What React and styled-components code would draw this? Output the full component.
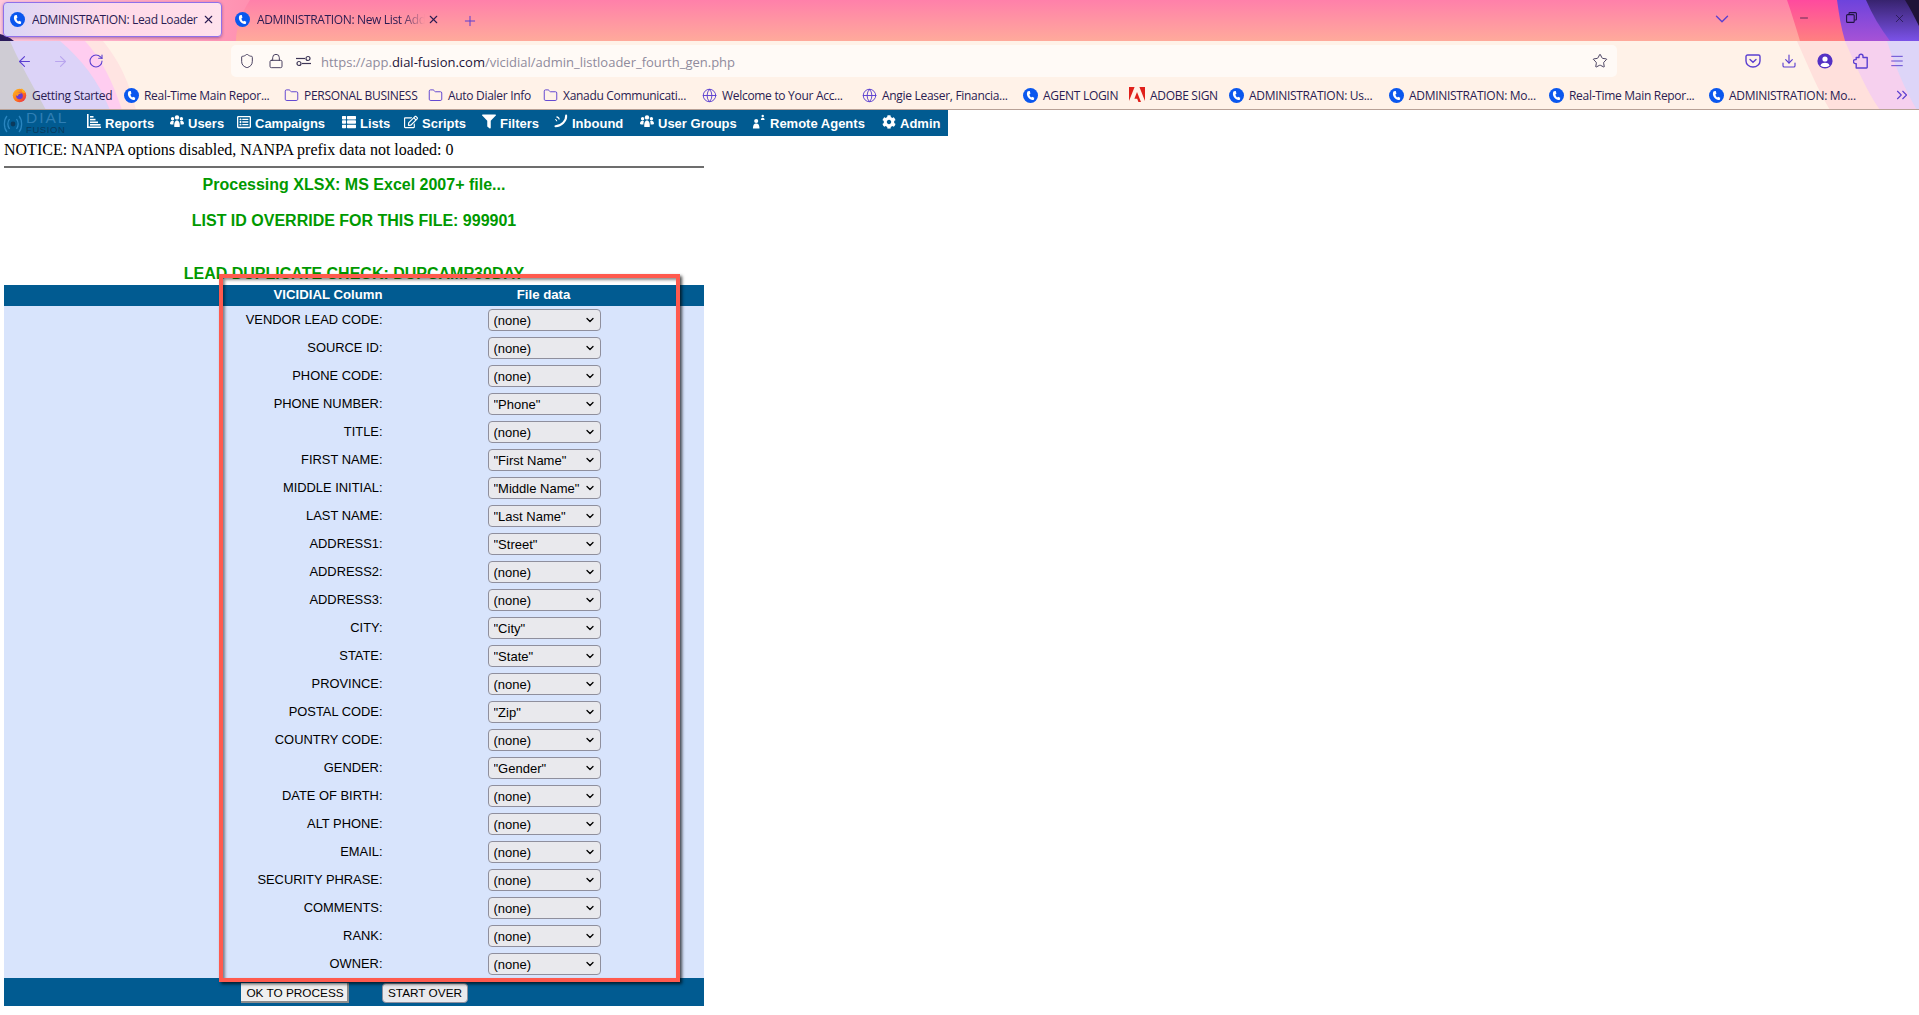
import React from 'react';
import styled, { createGlobalStyle } from 'styled-components';
import { ArrowLeft, ArrowRight, RotateCw, Shield, Lock, Star, Download, ChevronDown, X, Plus, Minus, Folder, Globe, Menu, ChevronsRight } from 'lucide-react';
import { FaRegListAlt, FaThList, FaRegEdit, FaFilter, FaCog } from 'react-icons/fa';

const Global = createGlobalStyle`
  html, body { margin: 0; padding: 0; background: #fff; overflow: hidden; height: 100%; }
  #root { width: 1919px; height: 1015px; }
`;

const UI = `"Open Sans", "Noto Sans", sans-serif`;
const AR = `"Liberation Sans", Arial, sans-serif`;

const Chrome = styled.header`
  position: relative; height: 110px; box-sizing: border-box; border-bottom: 1px solid #b8a196;
  background: #fff2e8; overflow: hidden; font-family: ${UI}; color: #2a1c52;
`;
const Decor = styled.svg`position: absolute; inset: 0; width: 1919px; height: 110px;`;
const Layer = styled.div`position: relative; display: flex; flex-direction: column;`;

const TabStrip = styled.div`display: flex; align-items: center; height: 41px; padding-left: 3px; position: relative;`;
const Tab = styled.div`
  display: flex; align-items: center; box-sizing: border-box; height: 35px; margin-top: -2px; width: ${p => p.$w}px; padding-left: ${p => p.$pad}px;
  border-radius: 4px; position: relative;
  ${p => p.$active && `background: linear-gradient(90deg, rgba(214,214,248,.95), rgba(255,224,238,.85) 45%, #ffe2ec); border: 1px solid #8f70ea; box-shadow: 0 1px 3px rgba(60,30,120,.45);`}
`;
const TabTitle = styled.span`
  margin-left: 7px; font-size: 12px; width: ${p => p.$w}px; flex: none; white-space: nowrap; overflow: hidden; letter-spacing: -.35px;
  ${p => p.$fade && `-webkit-mask-image: linear-gradient(90deg,#000 85%,transparent);`}
`;
const TabClose = styled(X)`margin-left: ${p => p.$m}px; flex: none;`;
const NewTab = styled(Plus)`margin-left: 18px; color: #5b3fd0; flex: none;`;
const ListTabs = styled(ChevronDown)`position: absolute; left: 1711px; top: 8px; color: #5b3fd0;`;
const WindowControls = styled.div`position: absolute; left: 1798px; top: 12px; display: flex; gap: 36px; color: #1f1442;`;

const Toolbar = styled.div`display: flex; align-items: center; height: 36px; padding-left: 15px;`;
const ToolBtn = styled.span`
  display: flex; width: 18px; justify-content: center; margin-top: 4px; margin-right: ${p => p.$m || 0}px; color: ${p => p.$dim ? '#b9a5ee' : '#5b3fd0'};
`;
const UrlBar = styled.div`
  width: 1386px; height: 32px; margin-left: 126px; margin-top: 4px; background: #fffaf6; border-radius: 5px; box-sizing: border-box;
  display: flex; align-items: center; padding-left: 8px;
`;
const UrlIcon = styled.span`display: flex; width: 16px; justify-content: center; margin-right: ${p => p.$m}px; color: #3d3556;`;
const Url = styled.span`font-size: 13px; color: #8f8a9c; margin: 1px 0 0 1px; white-space: nowrap; width: 1271px; flex: none;`;
const UrlHost = styled.span`color: #1c1238;`;
const RightIcons = styled.div`display: flex; margin-left: 128px; gap: 20px; color: #5b3fd0; margin-top: 4px;`;

const Bookmarks = styled.div`display: flex; align-items: center; box-sizing: border-box; height: 32px; padding: 4px 0 0 12px; font-size: 12px;`;
const Bookmark = styled.div`display: flex; align-items: center; width: ${p => p.$w}px; flex: none; white-space: nowrap; overflow: hidden; letter-spacing: -.3px;`;
const BookmarkLabel = styled.span`margin-left: 5px;`;
const FolderIcon = styled(Folder)`color: #5b3fd0; flex: none;`;
const GlobeIcon = styled(Globe)`color: #5b3fd0; flex: none;`;
const More = styled(ChevronsRight)`color: #5b3fd0; margin-left: 20px; flex: none;`;

const NavBar = styled.nav`
  width: 948px; height: 26px; background: #015b91; display: flex; align-items: center;
  font: bold 13px ${AR}; color: #fff;
`;
const Logo = styled.div`display: flex; width: 87px; height: 26px; flex: none; padding-left: 3px; box-sizing: border-box; align-items: flex-start;`;
const LogoText = styled.div`display: flex; flex-direction: column; margin-left: 3px; font-family: ${AR}; font-weight: normal;`;
const LogoDial = styled.span`font-size: 15.5px; line-height: 15px; color: #2f7fb5; letter-spacing: 2px;`;
const LogoFusion = styled.span`font-size: 9.5px; line-height: 10px; color: #0b3a5c; letter-spacing: .6px;`;
const NavItem = styled.div`display: flex; align-items: center; width: ${p => p.$w}px; flex: none; white-space: nowrap;`;
const NavIcon = styled.span`display: flex; width: 14px; justify-content: center; margin-right: 4px; margin-top: -3px; flex: none;`;

const Page = styled.main`width: 700px; margin-left: 4px;`;
const Notice = styled.div`font: 16px/18px "Liberation Serif", "Times New Roman", serif; color: #000; margin-top: 5px;`;
const Rule = styled.hr`border: 0; height: 2px; background: #6d6d6d; margin: 7px 0 0;`;
const Status = styled.div`font: bold 16px/18px ${AR}; color: #009900; text-align: center; margin-top: ${p => p.$m}px;`;

const Table = styled.section`position: relative; margin-top: 2px; background: #d8e4fc; font-family: ${AR};`;
const Head = styled.div`
  display: grid; grid-template-columns: 378.5px 1fr; height: 21px; background: #015b91; color: #fff; font-size: 13.2px; font-weight: bold; align-items: center;
`;
const HeadLeft = styled.div`text-align: right; margin-top: -3px;`;
const HeadRight = styled.div`text-align: center; width: 322px; margin-top: -3px;`;
const Row = styled.div`display: grid; grid-template-columns: 378.5px 1fr; height: 28px; align-items: center;`;
const Label = styled.label`font-size: 12.9px; color: #000; text-align: right; margin-bottom: 2px;`;
const SelectWrap = styled.div`position: relative; width: 113px; height: 22px; margin-left: 105px;`;
const Select = styled.select`
  appearance: none; width: 113px; height: 22px; box-sizing: border-box; border: 1px solid #8f8f9d; border-radius: 4px; background: #e9e9ed;
  font: 13px ${AR}; color: #000; padding: 0 16px 0 5px; margin: 0; display: block;
`;
const Arrow = styled(ChevronDown)`position: absolute; right: 4.5px; top: 5px; pointer-events: none;`;
const Foot = styled.div`display: flex; height: 28px; background: #015b91; padding-left: 237px; gap: 33px; align-items: flex-start; box-sizing: border-box; padding-top: 5px;`;
const Btn = styled.button`
  height: 20px; width: ${p => p.$w}px; box-sizing: border-box; margin: 0; font: 11.8px ${AR}; color: #000; background: #efefef;
  ${p => p.$square ? `padding: 2px 0 0 2px; border: 0; border-right: 2px solid #8d8d8d; border-bottom: 2px solid #8d8d8d;` : `padding: 0; border: 1px solid #8f8f9d; border-radius: 4px; background: #e9e9ed;`}
`;
const Marker = styled.div`
  position: absolute; left: 214.5px; top: -11px; width: 461px; height: 708px; box-sizing: border-box;
  border: 4.5px solid #ff5a4e;
  box-shadow: 2px 2px 3px rgba(0,0,0,.7), inset 2px 2px 3px rgba(0,0,0,.45);
  pointer-events: none;
`;

const PhoneFav = () => (
  <svg width="15" height="15" viewBox="0 0 16 16" style={{ flex: 'none' }}>
    <circle cx="8" cy="8" r="8" fill="#0a57ee" />
    <path d="M5 3.4 C3.6 5.2 4 8 5.6 10.2 C7.2 12.4 9.6 13.4 11.6 12.6 L12 10.4 L9.6 9.3 L8.8 10.1 C7.8 9.4 7 8 6.8 6.8 L7.9 6.2 L7.3 3.2 Z" fill="#fff" />
  </svg>
);
const FirefoxFav = () => (
  <svg width="15" height="16" viewBox="0 0 16 16" style={{ flex: 'none' }}>
    <defs><linearGradient id="ff" x1="0" y1="0" x2="1" y2="1"><stop offset="0" stopColor="#ffc21a" /><stop offset=".6" stopColor="#ff6a1f" /><stop offset="1" stopColor="#e01f5a" /></linearGradient></defs>
    <circle cx="8" cy="8.6" r="7.2" fill="url(#ff)" />
    <path d="M10 0.8 C12.4 2.2 13.6 3.8 14.2 6 L11 5 Z" fill="#ffb31a" />
    <circle cx="8" cy="8.8" r="3.6" fill="#6a3ad0" />
    <path d="M3 6.5 C5 5 8 4.8 10.5 6 C8.5 6 6.5 7 6.2 9 C5 9 3.8 8 3 6.5Z" fill="#ff9a1f" />
  </svg>
);
const AdobeFav = () => (
  <svg width="16" height="16" viewBox="0 0 16 16" style={{ flex: 'none' }}>
    <path d="M0 0H5.6L0 14Z M10.4 0H16V14Z M8 5L12 15H9.4L8.2 11.8H5.4Z" fill="#e0201b" />
  </svg>
);
const ReportsIcon = () => (
  <svg width="14" height="15" viewBox="0 0 14 15" fill="#fff">
    <path d="M0 0H1.6V12.6H14V14H0Z" /><rect x="3" y="2" width="3.5" height="1.6" /><rect x="3" y="4.8" width="5.5" height="1.6" /><rect x="3" y="7.5" width="8" height="1.6" /><rect x="3" y="10" width="10.5" height="1.6" />
  </svg>
);
const GroupIcon = () => (
  <svg width="14" height="13" viewBox="0 0 14 13" fill="#fff">
    <circle cx="7" cy="2.4" r="2.2" /><circle cx="2.6" cy="3.8" r="1.7" /><circle cx="11.4" cy="3.8" r="1.7" />
    <path d="M4.3 12C4 7.6 5 5.4 7 5.4C9 5.4 10 7.6 9.7 12Z" /><path d="M0 9C0 6.8 1 5.8 2.6 5.8C3.2 5.8 3.6 6 3.9 6.2C3.5 7.2 3.4 8.2 3.4 9.6C1.8 9.6 .6 9.4 0 9Z" /><path d="M14 9C14 6.8 13 5.8 11.4 5.8C10.8 5.8 10.4 6 10.1 6.2C10.5 7.2 10.6 8.2 10.6 9.6C12.2 9.6 13.4 9.4 14 9Z" />
  </svg>
);
const InboundIcon = () => (
  <svg width="15" height="15" viewBox="0 0 15 15" fill="none" stroke="#fff">
    <path d="M13 1.2C13.4 6.6 8.2 12.4 1.6 12.6" strokeWidth="2.2" strokeLinecap="round" />
    <path d="M2.6 2.6C4.4 2.8 5.4 3.8 5.6 5.4" strokeWidth="1.2" /><path d="M1.2 5.4C2.2 5.5 2.9 6.2 3 7.2" strokeWidth="1.2" />
  </svg>
);
const RemoteIcon = () => (
  <svg width="15" height="15" viewBox="0 0 15 15" fill="#fff">
    <circle cx="4.5" cy="7" r="2.2" /><path d="M1 15 C1 11 2.5 9.6 4.5 9.6 C6.5 9.6 8 11 8 15Z" /><circle cx="11.5" cy="1.6" r="1.3" /><path d="M9.5 6 C9.5 4.2 10.3 3.4 11.5 3.4 C12.7 3.4 13.5 4.2 13.5 6Z" />
  </svg>
);
const SliderIcon = () => (
  <svg width="15" height="12" viewBox="0 0 15 12" fill="none" stroke="#3d3556" strokeWidth="1.2">
    <path d="M0 3.5H9" /><circle cx="12" cy="3.5" r="2" /><path d="M15 8.5H6" /><circle cx="3" cy="8.5" r="2" />
  </svg>
);
const PocketIcon = () => (
  <svg width="16" height="16" viewBox="0 0 16 16" fill="none" stroke="currentColor" strokeWidth="1.4">
    <path d="M2.5 2H13.5C14.3 2 15 2.7 15 3.5V8C15 11.5 11.8 14 8 14C4.2 14 1 11.5 1 8V3.5C1 2.7 1.7 2 2.5 2Z" /><path d="M5 6.5L8 9.3L11 6.5" strokeLinecap="round" />
  </svg>
);
const ProfileIcon = () => (
  <svg width="16" height="16" viewBox="0 0 16 16">
    <circle cx="8" cy="8" r="7.6" fill="#5431c4" /><circle cx="8" cy="6" r="2.6" fill="#fff" /><path d="M3.4 12.4C4.4 10.4 6 9.8 8 9.8C10 9.8 11.6 10.4 12.6 12.4C10.2 14.4 5.8 14.4 3.4 12.4Z" fill="#fff" />
  </svg>
);
const ExtensionIcon = () => (
  <svg width="16" height="16" viewBox="0 0 16 16" fill="none" stroke="currentColor" strokeWidth="1.4" strokeLinejoin="round">
    <path d="M6 4.5V3.2a2 2 0 0 1 4 0V4.5h4.2v9.8a.7.7 0 0 1-.7.7H3.2V10.6H2.4a2 2 0 0 1 0-4h.8V4.5Z" />
  </svg>
);
const SignalIcon = () => (
  <svg width="20" height="22" viewBox="0 0 20 22" fill="none" stroke="#2a86c0" strokeWidth="1.3" style={{ flex: 'none', marginTop: 3 }}>
    <path d="M4 3C0.5 7 0.5 15 4 19" /><path d="M6.5 6C4.5 9 4.5 13 6.5 16" /><path d="M16 3C19.5 7 19.5 15 16 19" /><path d="M13.5 6C15.5 9 15.5 13 13.5 16" /><circle cx="10" cy="11" r="2.4" fill="#0b3a5c" stroke="none" />
  </svg>
);
const RestoreIcon = () => (
  <svg width="11" height="11" viewBox="0 0 11 11" fill="none" stroke="currentColor" strokeWidth="1.1">
    <rect x=".6" y="2.6" width="7.6" height="7.8" rx="1" /><path d="M3 2.4V1.4C3 .9 3.4 .6 3.8 .6H9.4C10 .6 10.4 1 10.4 1.6V7.2C10.4 7.7 10 8 9.6 8H8.4" />
  </svg>
);

const bookmarks = [
  { n: 'Getting Started', w: 112, i: 'ff' },
  { n: 'Real-Time Main Repor...', w: 160, i: 'ph' },
  { n: 'PERSONAL BUSINESS', w: 144, i: 'fo' },
  { n: 'Auto Dialer Info', w: 115, i: 'fo' },
  { n: 'Xanadu Communicati...', w: 159, i: 'fo' },
  { n: 'Welcome to Your Acc...', w: 160, i: 'gl' },
  { n: 'Angie Leaser, Financia...', w: 161, i: 'gl' },
  { n: 'AGENT LOGIN', w: 106, i: 'ph' },
  { n: 'ADOBE SIGN', w: 100, i: 'ad' },
  { n: 'ADMINISTRATION: Us...', w: 160, i: 'ph' },
  { n: 'ADMINISTRATION: Mo...', w: 160, i: 'ph' },
  { n: 'Real-Time Main Repor...', w: 160, i: 'ph' },
  { n: 'ADMINISTRATION: Mo...', w: 164, i: 'ph' },
];
const bmIcon = { ff: <FirefoxFav />, ph: <PhoneFav />, fo: <FolderIcon size={15} strokeWidth={1.5} />, gl: <GlobeIcon size={15} strokeWidth={1.5} />, ad: <AdobeFav /> };

const navItems = [
  { n: 'Reports', w: 83, i: <ReportsIcon /> },
  { n: 'Users', w: 67, i: <GroupIcon /> },
  { n: 'Campaigns', w: 105, i: <FaRegListAlt size={14} /> },
  { n: 'Lists', w: 62, i: <FaThList size={14} /> },
  { n: 'Scripts', w: 78, i: <FaRegEdit size={14} /> },
  { n: 'Filters', w: 72, i: <FaFilter size={15} /> },
  { n: 'Inbound', w: 86, i: <InboundIcon /> },
  { n: 'User Groups', w: 112, i: <GroupIcon /> },
  { n: 'Remote Agents', w: 130, i: <RemoteIcon /> },
  { n: 'Admin', w: 66, i: <FaCog size={14} /> },
];

const rows = [
  ['VENDOR LEAD CODE:', '(none)'], ['SOURCE ID:', '(none)'], ['PHONE CODE:', '(none)'], ['PHONE NUMBER:', '"Phone"'],
  ['TITLE:', '(none)'], ['FIRST NAME:', '"First Name"'], ['MIDDLE INITIAL:', '"Middle Name"'], ['LAST NAME:', '"Last Name"'],
  ['ADDRESS1:', '"Street"'], ['ADDRESS2:', '(none)'], ['ADDRESS3:', '(none)'], ['CITY:', '"City"'], ['STATE:', '"State"'],
  ['PROVINCE:', '(none)'], ['POSTAL CODE:', '"Zip"'], ['COUNTRY CODE:', '(none)'], ['GENDER:', '"Gender"'],
  ['DATE OF BIRTH:', '(none)'], ['ALT PHONE:', '(none)'], ['EMAIL:', '(none)'], ['SECURITY PHRASE:', '(none)'],
  ['COMMENTS:', '(none)'], ['RANK:', '(none)'], ['OWNER:', '(none)'],
];

export default function App() {
  return (
    <>
      <Global />
      <Chrome>
        <Decor viewBox="0 0 1919 110" preserveAspectRatio="none">
          <defs>
            <linearGradient id="strip" x1="0" y1="0" x2="0" y2="1">
              <stop offset="0" stopColor="#ff80aa" /><stop offset="1" stopColor="#ffaa9b" />
            </linearGradient>
            <linearGradient id="hot" x1="0" y1="0" x2="0" y2="1">
              <stop offset="0" stopColor="#ff4a9e" /><stop offset="1" stopColor="#ff8080" />
            </linearGradient>
            <linearGradient id="purp" x1="0" y1="0" x2="0" y2="1">
              <stop offset="0" stopColor="#6d43dc" /><stop offset="1" stopColor="#a652d6" />
            </linearGradient>
            <linearGradient id="dark" x1="0" y1="0" x2="0" y2="1">
              <stop offset="0" stopColor="#37236e" /><stop offset="1" stopColor="#7b52e8" />
            </linearGradient>
            <linearGradient id="leftTop" x1="0" y1="0" x2="1" y2="0">
              <stop offset="0" stopColor="#ffc9dc" /><stop offset="1" stopColor="#ff90b0" />
            </linearGradient>
          </defs>
          <rect x="0" y="0" width="1919" height="41" fill="url(#strip)" />
          <path d="M0 0H250C240 15 236 30 236 41H0Z" fill="url(#leftTop)" />
          <path d="M0 34C4 35 9 37 14 41H0Z" fill="#2b1b5a" />
          <path d="M1787 0C1792 14 1796 28 1800 41H1919V0Z" fill="url(#hot)" />
          <path d="M1837 0C1839 14 1841 28 1845 41H1919V0Z" fill="url(#purp)" />
          <path d="M1866 0C1872 14 1880 28 1890 41H1919V0Z" fill="url(#dark)" />
          <path d="M1905 0C1910 8 1915 18 1919 26V0Z" fill="#1f1338" />
          <path d="M103 41C118 60 128 78 136 110H0V41Z" fill="#ffe4e2" />
          <path d="M85 41C102 60 112 80 122 110H0V41Z" fill="#ffcdf0" />
          <path d="M60 41C82 60 98 80 110 110H0V41Z" fill="#dcd3f8" />
          <path d="M10 41C18 60 32 84 46 110H0V41Z" fill="#cfccd4" />
          <path d="M1797 41C1808 66 1818 90 1830 110H1919V41Z" fill="#ffe0dc" />
          <path d="M1845 41C1856 66 1866 90 1880 110H1919V41Z" fill="#f6d0ee" />
          <path d="M1887 41C1895 66 1905 90 1917 110H1919V41Z" fill="#ddd5f8" />
        </Decor>
        <Layer>
          <TabStrip>
            <Tab $active $w={219} $pad={6}>
              <PhoneFav />
              <TabTitle $w={169}>ADMINISTRATION: Lead Loader</TabTitle>
              <TabClose size={13} $m={1} />
            </Tab>
            <Tab $w={222} $pad={13}>
              <PhoneFav />
              <TabTitle $w={168} $fade>ADMINISTRATION: New List Add</TabTitle>
              <TabClose size={13} $m={2} />
            </Tab>
            <NewTab size={16} strokeWidth={1.5} />
            <ListTabs size={22} strokeWidth={1.5} />
            <WindowControls>
              <Minus size={12} strokeWidth={1.4} />
              <RestoreIcon />
              <X size={13} strokeWidth={1.3} />
            </WindowControls>
          </TabStrip>
          <Toolbar>
            <ToolBtn $m={18}><ArrowLeft size={17} strokeWidth={1.5} /></ToolBtn>
            <ToolBtn $dim $m={18}><ArrowRight size={17} strokeWidth={1.5} /></ToolBtn>
            <ToolBtn><RotateCw size={16} strokeWidth={1.6} /></ToolBtn>
            <UrlBar>
              <UrlIcon $m={13}><Shield size={16} strokeWidth={1.4} /></UrlIcon>
              <UrlIcon $m={11}><Lock size={16} strokeWidth={1.4} /></UrlIcon>
              <UrlIcon $m={9}><SliderIcon /></UrlIcon>
              <Url>https://app.<UrlHost>dial-fusion.com</UrlHost>/vicidial/admin_listloader_fourth_gen.php</Url>
              <UrlIcon $m={0}><Star size={16} strokeWidth={1.4} /></UrlIcon>
            </UrlBar>
            <RightIcons>
              <PocketIcon />
              <Download size={16} strokeWidth={1.7} />
              <ProfileIcon />
              <ExtensionIcon />
              <Menu size={16} strokeWidth={1.4} />
            </RightIcons>
          </Toolbar>
          <Bookmarks>
            {bookmarks.map((b, i) => (
              <Bookmark key={i} $w={b.w}>{bmIcon[b.i]}<BookmarkLabel>{b.n}</BookmarkLabel></Bookmark>
            ))}
            <More size={18} strokeWidth={1.5} />
          </Bookmarks>
        </Layer>
      </Chrome>
      <NavBar>
        <Logo>
          <SignalIcon />
          <LogoText><LogoDial>DIAL</LogoDial><LogoFusion>FUSION</LogoFusion></LogoText>
        </Logo>
        {navItems.map(n => (
          <NavItem key={n.n} $w={n.w}><NavIcon>{n.i}</NavIcon>{n.n}</NavItem>
        ))}
      </NavBar>
      <Page>
        <Notice>NOTICE: NANPA options disabled, NANPA prefix data not loaded: 0</Notice>
        <Rule />
        <Status $m={8}>Processing XLSX: MS Excel 2007+ file...</Status>
        <Status $m={18}>LIST ID OVERRIDE FOR THIS FILE: 999901</Status>
        <Status $m={35}>LEAD DUPLICATE CHECK: DUPCAMP30DAY</Status>
        <Table>
          <Head><HeadLeft>VICIDIAL Column</HeadLeft><HeadRight>File data</HeadRight></Head>
          {rows.map(([l, v]) => (
            <Row key={l}>
              <Label>{l}</Label>
              <SelectWrap>
                <Select defaultValue={v} aria-label={l}><option>{v}</option></Select>
                <Arrow size={12} strokeWidth={2.6} />
              </SelectWrap>
            </Row>
          ))}
          <Foot>
            <Btn $square $w={108}>OK TO PROCESS</Btn>
            <Btn $w={86}>START OVER</Btn>
          </Foot>
          <Marker />
        </Table>
      </Page>
    </>
  );
}
